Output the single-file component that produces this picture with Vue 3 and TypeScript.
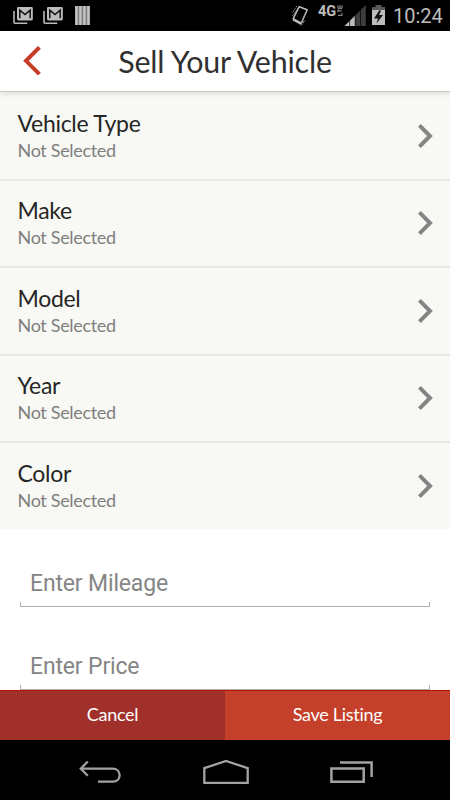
<script setup lang="ts">
import { ref } from 'vue'

interface Option {
  label: string
  value: string
}

const options: Option[] = ['Vehicle Type', 'Make', 'Model', 'Year', 'Color'].map((label) => ({
  label,
  value: 'Not Selected',
}))
const mileage = ref('')
const price = ref('')
</script>

<template>
  <div class="screen">
    <div class="status">
      <svg class="notices" width="100" height="31" viewBox="0 0 100 31">
        <g v-for="x in [0, 30]" :key="x" :transform="`translate(${x} 0)`">
          <path d="M14 11V22.2Q14 23.2 15 23.2H27.3" fill="none" stroke="#b9b9b9" stroke-width="1.6" />
          <rect x="17" y="7" width="15.8" height="13.4" rx="1.3" fill="#bdbdbd" />
          <path d="M19.8 18.3V10.2L25 14.6L30.2 10.2V18.3" fill="none" stroke="#111" stroke-width="1.5" />
        </g>
        <rect x="75" y="6" width="15" height="19" fill="#777" />
        <path d="M76.5 6v19M80.4 6v19M84.4 6v19M88.4 6v19" stroke="#c4c4c4" stroke-width="2.5" />
      </svg>
      <div class="system">
        <svg width="27" height="31" viewBox="289 0 27 31">
          <path d="M299.2 6.7L307.2 9.8L301.2 23.2L293.2 18.6Z" fill="none" stroke="#bdbdbd" stroke-width="1.5" stroke-linejoin="round" />
          <path d="M293.2 18.6L301.2 23.2L300.5 24.7L292.7 20.4Z" fill="#bdbdbd" />
          <path d="M297 6L292 13M298.2 8L292.3 16M303.5 21L299.5 26M305 20.5L301 25.8M305 15L301.5 23" stroke="#999" stroke-width="1" stroke-dasharray="1.3 .8" />
        </svg>
        <span class="network">4G</span>
        <svg class="signal" width="48" height="31" viewBox="337 0 48 31">
          <path d="M338 5.3V8.3H342V5.3M340 5.3V8.3M338 9.3V12.3M338 10.8H342M338 15.4H342V12.9" fill="none" stroke="#aaa" stroke-width=".9" />
          <path d="M344.5 26L365.8 5V26Z" fill="#3d3d3d" />
          <path d="M344.5 26L355 15.7V26Z" fill="#bdbdbd" />
          <path d="M349.6 20V26M355.2 14V26M360.5 9V26" stroke="#000" stroke-width=".7" />
          <path d="M372 7H375.5V5H381.5V7H385V10.5H372Z" fill="#575757" />
          <rect x="372" y="10" width="13" height="15" fill="#bdbdbd" />
          <path d="M379.5 10L374 18.5H378L376.5 23.5L383 15H379L381 11Z" fill="#111" />
        </svg>
        <span class="clock">10:24</span>
      </div>
    </div>

    <header class="header">
      <button class="back" aria-label="Back">
        <svg width="18" height="30" viewBox="0 0 18 30">
          <path d="M16.4 1.4L3 14.8L16.4 28.2" fill="none" stroke="#c63d27" stroke-width="4" />
        </svg>
      </button>
      <h1>Sell Your Vehicle</h1>
    </header>

    <main class="content">
      <ul class="options">
        <li v-for="option in options" :key="option.label" class="option">
          <div class="text">
            <div class="label">{{ option.label }}</div>
            <div class="value">{{ option.value }}</div>
          </div>
          <svg width="15" height="24" viewBox="0 0 15 24">
            <path d="M1.4 1.4L12 12L1.4 22.6" fill="none" stroke="#858585" stroke-width="4" />
          </svg>
        </li>
      </ul>
      <div class="fields">
        <div class="field"><input v-model="mileage" placeholder="Enter Mileage" /></div>
        <div class="field"><input v-model="price" placeholder="Enter Price" /></div>
      </div>
    </main>

    <footer class="actions">
      <button class="cancel">Cancel</button>
      <button class="save">Save Listing</button>
    </footer>

    <nav class="navigation">
      <svg width="44" height="26" viewBox="78 759 44 26">
        <path d="M81 768.7H112.5C122 768.7 122 781.6 112.5 781.6H98" fill="none" stroke="#a3a3a3" stroke-width="2.3" />
        <path d="M87.8 761.5L80.8 768.7L87.8 775.8" fill="none" stroke="#a3a3a3" stroke-width="2.3" />
      </svg>
      <svg width="46" height="26" viewBox="202 758 46 26">
        <path d="M203.3 781.8V767.2L225 760L246.7 767.2V781.8Z" fill="none" stroke="#a3a3a3" stroke-width="2.3" />
      </svg>
      <svg width="44" height="24" viewBox="330 760 44 24">
        <path d="M331.4 768.4H363.7V781.7H331.4ZM340 762.4H371.6V777" fill="none" stroke="#a3a3a3" stroke-width="2.5" />
      </svg>
    </nav>
  </div>
</template>

<style>
body {
  margin: 0;
  overflow: hidden;
}
</style>

<style scoped>
.screen {
  width: 450px;
  height: 800px;
  display: flex;
  flex-direction: column;
  overflow: hidden;
  background: #fff;
  font-family: Lato, sans-serif;
  font-variant-ligatures: none;
}
svg {
  display: block;
  flex: none;
}
button {
  border: 0;
  padding: 0;
  background: none;
  font: inherit;
}
.status {
  height: 31px;
  flex: none;
  display: flex;
  justify-content: space-between;
  background: #000;
  color: #bdbdbd;
  font-family: Roboto, sans-serif;
}
.system {
  display: flex;
  width: 161px;
}
.network {
  width: 21px;
  padding: 4px 0 0 2px;
  box-sizing: border-box;
  font-size: 14.5px;
  line-height: 16px;
  font-weight: 700;
  white-space: nowrap;
}
.clock {
  margin-left: 8px;
  font-size: 20px;
  line-height: 33px;
}
.header {
  position: relative;
  z-index: 1;
  height: 60px;
  flex: none;
  display: grid;
  grid-template-columns: 60px 1fr 60px;
  align-items: center;
  background: #fff;
  border-bottom: 1px solid #c9cbca;
  box-shadow: 0 2px 5px rgba(0, 0, 0, 0.1);
}
.back {
  padding-left: 23px;
}
h1 {
  margin: 0;
  font-size: 30.4px;
  line-height: 36px;
  font-weight: 400;
  letter-spacing: -0.18px;
  color: #303030;
  text-align: center;
  white-space: nowrap;
}
.content {
  flex: 1;
  min-height: 0;
  overflow: hidden;
}
.options {
  margin: 0;
  padding: 1px 0 0;
  list-style: none;
  background: #f8f9f4;
}
.option {
  height: 87.5px;
  box-sizing: border-box;
  display: flex;
  justify-content: space-between;
  align-items: center;
  padding: 0 17.5px;
  border-bottom: 2px solid #e8e9e5;
}
.option:last-child {
  height: 86px;
  border-bottom: 0;
}
.text {
  padding-top: 1px;
}
.label {
  font-size: 23px;
  line-height: 28px;
  letter-spacing: -0.3px;
  color: #262626;
}
.value {
  font-size: 18px;
  line-height: 27px;
  letter-spacing: -0.33px;
  color: #7f7f7f;
}
.fields {
  padding: 30px 20px 0;
}
.field {
  height: 48px;
  margin-bottom: 35px;
  display: flex;
  align-items: center;
  background:
    linear-gradient(#b0b0b0, #b0b0b0) bottom / 100% 1.5px no-repeat,
    linear-gradient(#b0b0b0, #b0b0b0) left bottom / 1px 5px no-repeat,
    linear-gradient(#b0b0b0, #b0b0b0) right bottom / 1px 5px no-repeat;
}
input {
  width: 100%;
  border: 0;
  outline: 0;
  padding: 2px 10px 0;
  background: transparent;
  font: 23px/30px Roboto, sans-serif;
  letter-spacing: -0.16px;
}
input::placeholder {
  color: #858585;
  opacity: 1;
}
.actions {
  height: 50px;
  flex: none;
  display: grid;
  grid-template-columns: 1fr 1fr;
  color: #fff;
  font-size: 18px;
  letter-spacing: -0.3px;
}
.actions button {
  color: #fff;
  letter-spacing: inherit;
  padding-bottom: 3px;
  border-top: 1px solid #b31010;
}
.cancel {
  background: #a1302b;
}
.actions .save {
  background: #c4402a;
}
.navigation {
  height: 60px;
  flex: none;
  box-sizing: border-box;
  display: flex;
  justify-content: space-between;
  align-items: center;
  padding: 4px 76px 0 78px;
  background: #000;
}
</style>
